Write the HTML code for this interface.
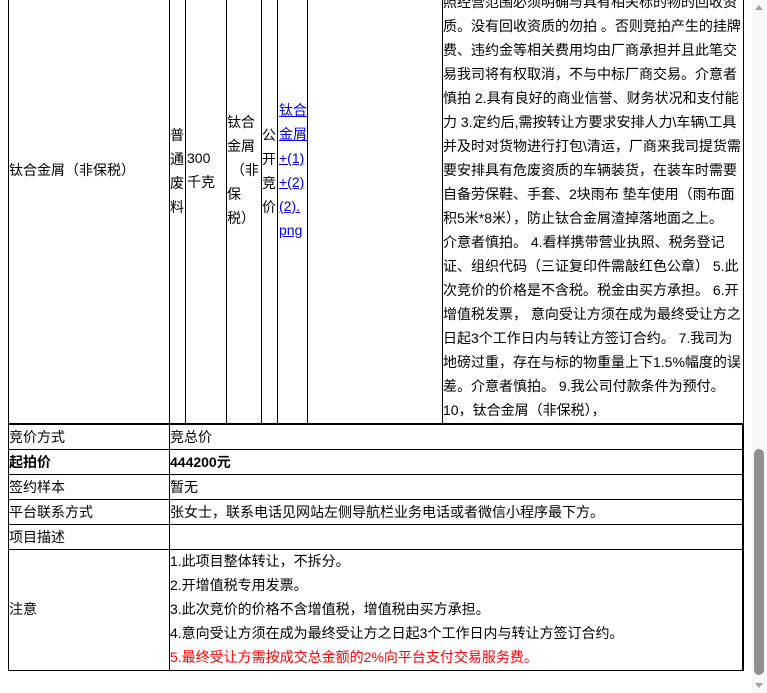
<!DOCTYPE html>
<html><head><meta charset="utf-8">
<style>
html,body{margin:0;padding:0;background:#fff;width:767px;height:693px;overflow:hidden;position:relative;
font-family:"Liberation Sans","Noto Sans CJK SC",sans-serif;font-size:14px;color:#000;}
.v{position:absolute;width:1px;background:#000;}
.h{position:absolute;height:1px;background:#000;}
.t{position:absolute;white-space:nowrap;line-height:24px;}
a{color:#00e;text-decoration:underline;}
</style></head><body>
<!-- top table verticals -->
<div class="v" style="left:8px;top:0;height:671px"></div>
<div class="v" style="left:169px;top:0;height:671px"></div>
<div class="v" style="left:185px;top:0;height:424px"></div>
<div class="v" style="left:226px;top:0;height:424px"></div>
<div class="v" style="left:261px;top:0;height:424px"></div>
<div class="v" style="left:277px;top:0;height:424px"></div>
<div class="v" style="left:307px;top:0;height:424px"></div>
<div class="v" style="left:442px;top:0;height:424px"></div>
<div class="v" style="left:743px;top:0;height:424px"></div>
<div class="v" style="left:742px;top:423px;height:248px;width:2px"></div>
<!-- horizontals -->
<div class="h" style="left:8px;top:423px;width:736px;height:2px"></div>
<div class="h" style="left:8px;top:449px;width:735px"></div>
<div class="h" style="left:8px;top:474px;width:735px"></div>
<div class="h" style="left:8px;top:499px;width:735px"></div>
<div class="h" style="left:8px;top:524px;width:735px"></div>
<div class="h" style="left:8px;top:549px;width:735px"></div>
<div class="h" style="left:8px;top:670px;width:736px"></div>

<div class="t" style="left:9px;top:158px">钛合金屑（非保税）</div>
<div class="t" style="left:170px;top:123px;line-height:24px">普<br>通<br>废<br>料</div>
<div class="t" style="left:187px;top:146px">300<br>千克</div>
<div class="t" style="left:227px;top:110px">钛合<br>金屑<br>&nbsp;（非<br>保<br>税）</div>
<div class="t" style="left:262px;top:123px">公<br>开<br>竞<br>价</div>
<div class="t" style="left:279px;top:98px"><a>钛合</a><br><a>金屑</a><br><a>+(1)</a><br><a>+(2)</a><br><a>(2).</a><br><a>png</a></div>

<div class="t" style="left:443px;top:-10px">照经营范围必须明确与具有相关标的物的回收资<br>质。没有回收资质的勿拍 。否则竞拍产生的挂牌<br>费、违约金等相关费用均由厂商承担并且此笔交<br>易我司将有权取消，不与中标厂商交易。介意者<br>慎拍 2.具有良好的商业信誉、财务状况和支付能<br>力 3.定约后,需按转让方要求安排人力\车辆\工具<br>并及时对货物进行打包\清运，厂商来我司提货需<br>要安排具有危废资质的车辆装货，在装车时需要<br>自备劳保鞋、手套、2块雨布 垫车使用（雨布面<br>积5米*8米），防止钛合金屑渣掉落地面之上。<br>介意者慎拍。 4.看样携带营业执照、税务登记<br>证、组织代码（三证复印件需敲红色公章） 5.此<br>次竞价的价格是不含税。税金由买方承担。 6.开<br>增值税发票， 意向受让方须在成为最终受让方之<br>日起3个工作日内与转让方签订合约。 7.我司为<br>地磅过重，存在与标的物重量上下1.5%幅度的误<br>差。介意者慎拍。 9.我公司付款条件为预付。<br>10，钛合金屑（非保税），</div>

<div class="t" style="left:9px;top:425px">竞价方式</div>
<div class="t" style="left:170px;top:425px">竞总价</div>
<div class="t" style="left:9px;top:450px;font-weight:bold">起拍价</div>
<div class="t" style="left:170px;top:450px;font-weight:bold">444200元</div>
<div class="t" style="left:9px;top:475px">签约样本</div>
<div class="t" style="left:170px;top:475px">暂无</div>
<div class="t" style="left:9px;top:500px">平台联系方式</div>
<div class="t" style="left:170px;top:500px">张女士，联系电话见网站左侧导航栏业务电话或者微信小程序最下方。</div>
<div class="t" style="left:9px;top:525px">项目描述</div>
<div class="t" style="left:9px;top:597px">注意</div>
<div class="t" style="left:170px;top:549px">1.此项目整体转让，不拆分。<br>2.开增值税专用发票。<br>3.此次竞价的价格不含增值税，增值税由买方承担。<br>4.意向受让方须在成为最终受让方之日起3个工作日内与转让方签订合约。<br><span style="color:#f00">5.最终受让方需按成交总金额的2%向平台支付交易服务费。</span></div>

<!-- scrollbar -->
<div style="position:absolute;left:752px;top:0;width:15px;height:693px;background:#f8f8f8"></div>
<div style="position:absolute;left:754px;top:449px;width:10px;height:226px;background:#909090;border-radius:5px"></div>
<div style="position:absolute;left:755px;top:5px;width:0;height:0;border-left:4px solid transparent;border-right:4px solid transparent;border-bottom:5px solid #a0a0a0"></div>
<div style="position:absolute;left:755px;top:683px;width:0;height:0;border-left:4px solid transparent;border-right:4px solid transparent;border-top:5px solid #a0a0a0"></div>
</body></html>
